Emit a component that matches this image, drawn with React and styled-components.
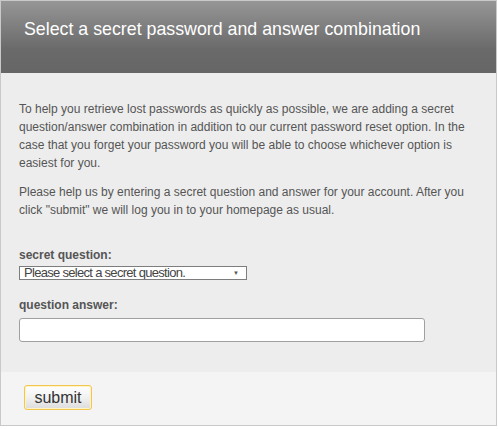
import React from "react";
import styled, { createGlobalStyle } from "styled-components";

const GlobalStyle = createGlobalStyle`
  body {
    margin: 0;
    background: #fff;
    font-family: "Liberation Sans", Arial, sans-serif;
  }
`;

function App() {
  return (
    <>
      <GlobalStyle />
      <Panel>
        <Header>
          <Title>Select a secret password and answer combination</Title>
        </Header>
        <Body>
          <Text>
            To help you retrieve lost passwords as quickly as possible, we are
            adding a secret question/answer combination in addition to our
            current password reset option. In the case that you forget your
            password you will be able to choose whichever option is easiest for
            you.
          </Text>
          <Text>
            Please help us by entering a secret question and answer for your
            account. After you click "submit" we will log you in to your
            homepage as usual.
          </Text>
          <Field $first>
            <Label>secret question:</Label>
            <SelectWrap>
              <Select defaultValue="">
                <option value="">Please select a secret question.</option>
              </Select>
              <Arrow>▼</Arrow>
            </SelectWrap>
          </Field>
          <Field>
            <Label>question answer:</Label>
            <Input type="text" />
          </Field>
        </Body>
        <Footer>
          <Button>submit</Button>
        </Footer>
      </Panel>
    </>
  );
}

export default App;

const Panel = styled.div`
  box-sizing: border-box;
  width: 497px;
  height: 426px;
  border: 1px solid #c9c9c9;
  display: flex;
  flex-direction: column;
  background: #f4f4f4;
`;

const Header = styled.div`
  height: 72px;
  padding: 0 0 0 23px;
  background: linear-gradient(to bottom, #969696 0px, #6a6a6a 48px, #666 72px);
  box-sizing: border-box;
`;

const Title = styled.h1`
  margin: 0;
  padding-top: 18px;
  font-size: 17.8px;
  font-weight: normal;
  line-height: 21px;
  color: #fff;
`;

const Body = styled.div`
  height: 299px;
  box-sizing: border-box;
  padding: 27px 22px 0 18px;
  background: #ededed;
`;

const Text = styled.p`
  margin: 0 0 11px;
  font-size: 12px;
  line-height: 18px;
  color: #555;
`;

const Field = styled.div`
  margin-top: ${(p) => (p.$first ? "27px" : "16px")};
`;

const Label = styled.div`
  font-size: 12px;
  font-weight: bold;
  line-height: 18px;
  color: #555;
`;

const SelectWrap = styled.div`
  position: relative;
  width: 228px;
  margin-top: 2px;
`;

const Select = styled.select`
  appearance: none;
  display: block;
  box-sizing: border-box;
  width: 228px;
  height: 14px;
  padding: 0 0 0 4px;
  border: 1px solid #7d7d7d;
  border-radius: 0;
  background: #fff;
  font-family: "Liberation Sans", Arial, sans-serif;
  font-size: 13px;
  line-height: 12px;
  letter-spacing: -0.7px;
  color: #444;
`;

const Arrow = styled.span`
  position: absolute;
  right: 8px;
  top: 3px;
  font-size: 6px;
  line-height: 8px;
  color: #555;
  pointer-events: none;
`;

const Input = styled.input`
  display: block;
  box-sizing: border-box;
  width: 406px;
  height: 24px;
  margin-top: 4px;
  border: 1px solid #a0a0a0;
  border-radius: 3px;
  background: #fff;
`;

const Footer = styled.div`
  flex: 1;
  padding: 13px 0 0 23px;
  background: #f4f4f4;
`;

const Button = styled.button`
  box-sizing: border-box;
  width: 68px;
  height: 25px;
  padding: 0;
  border: 1px solid #f3c74e;
  border-radius: 3px;
  background: linear-gradient(to bottom, #ffffff 0%, #f1f1f1 50%, #dcdcdc 100%);
  box-shadow: inset 0 0 0 1px #fff3c8;
  font-family: "Liberation Sans", Arial, sans-serif;
  font-size: 16px;
  color: #333;
`;
